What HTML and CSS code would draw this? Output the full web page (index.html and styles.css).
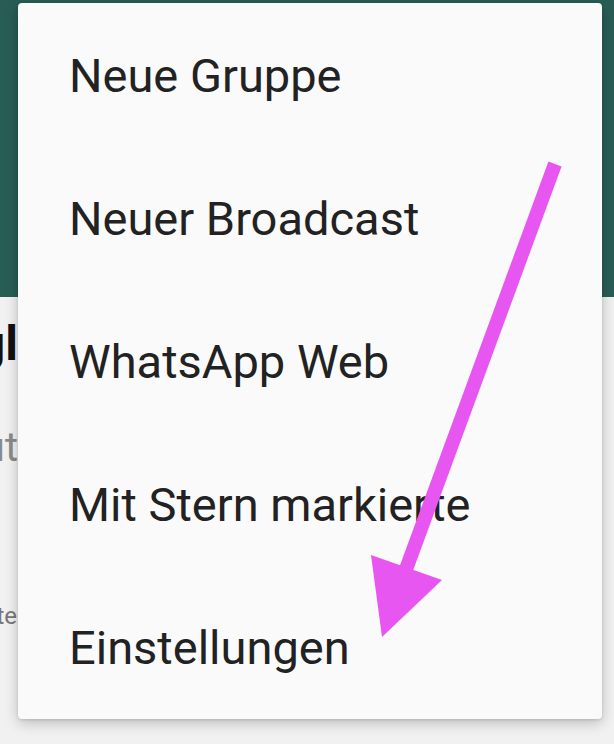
FILE: index.html
```html
<!DOCTYPE html>
<html lang="de">
<head>
    <meta charset="UTF-8">
    <meta name="viewport" content="width=device-width, initial-scale=1.0">
    <title>WhatsApp Menü</title>
    <link rel="stylesheet" href="styles.css">
</head>
<body>
    <div class="screen">
        <header class="toolbar"></header>

        <div class="chats">
            <div class="chat">
                <div class="chat-name"><span>Familie Vogl</span></div>
                <div class="chat-msg"><span>Gut</span></div>
            </div>
            <div class="chat-meta"><span>Heute</span></div>
        </div>

        <!-- overflow menu, opened over the toolbar -->
        <ul class="menu">
            <li>Neue Gruppe</li>
            <li>Neuer Broadcast</li>
            <li>WhatsApp Web</li>
            <li>Mit Stern markierte</li>
            <li>Einstellungen</li>
        </ul>

        <svg class="arrow" width="614" height="744" viewBox="0 0 614 744">
            <line x1="555" y1="164" x2="405" y2="572" stroke="#e756f0" stroke-width="14"/>
            <polygon points="371,555 442,580 382,637" fill="#e756f0"/>
        </svg>
    </div>
</body>
</html>
```

FILE: styles.css
```css
body {
    margin: 0;
    padding: 0;
    font-family: Roboto, "Noto Sans", sans-serif;
    background-color: #efefef;
}

.screen {
    position: relative;
    width: 614px;
    height: 744px;
    overflow: hidden;
    background-color: #f1f1f1;
}

.toolbar {
    height: 297px;
    background-color: #285d56;
}

.chats {
    width: 18px;
    overflow: hidden;
}

.chat-name,
.chat-msg,
.chat-meta {
    display: flex;
    justify-content: flex-end;
    white-space: nowrap;
}

.chat-name {
    margin-top: 14px;
    font-size: 48px;
    font-weight: bold;
    color: #111;
    line-height: 66px;
}

.chat-msg {
    margin-top: 46px;
    font-size: 40px;
    color: #8a8a8a;
    line-height: 50px;
}

.chat-meta {
    margin-top: 128px;
    font-size: 24px;
    color: #777;
    line-height: 30px;
}

.chat-meta span {
    padding-right: 1px;
}

.menu {
    position: absolute;
    top: 3px;
    left: 18px;
    width: 584px;
    margin: 0;
    padding: 1px 0 0 0;
    list-style: none;
    background-color: #fafafa;
    border-radius: 4px;
    box-shadow: 0 4px 14px rgba(0, 0, 0, 0.22), 0 1px 3px rgba(0, 0, 0, 0.12);
}

.menu li {
    height: 143px;
    line-height: 143px;
    padding-left: 51px;
    font-size: 47px;
    color: #222;
    white-space: nowrap;
}

.arrow {
    position: absolute;
    top: 0;
    left: 0;
}
```
